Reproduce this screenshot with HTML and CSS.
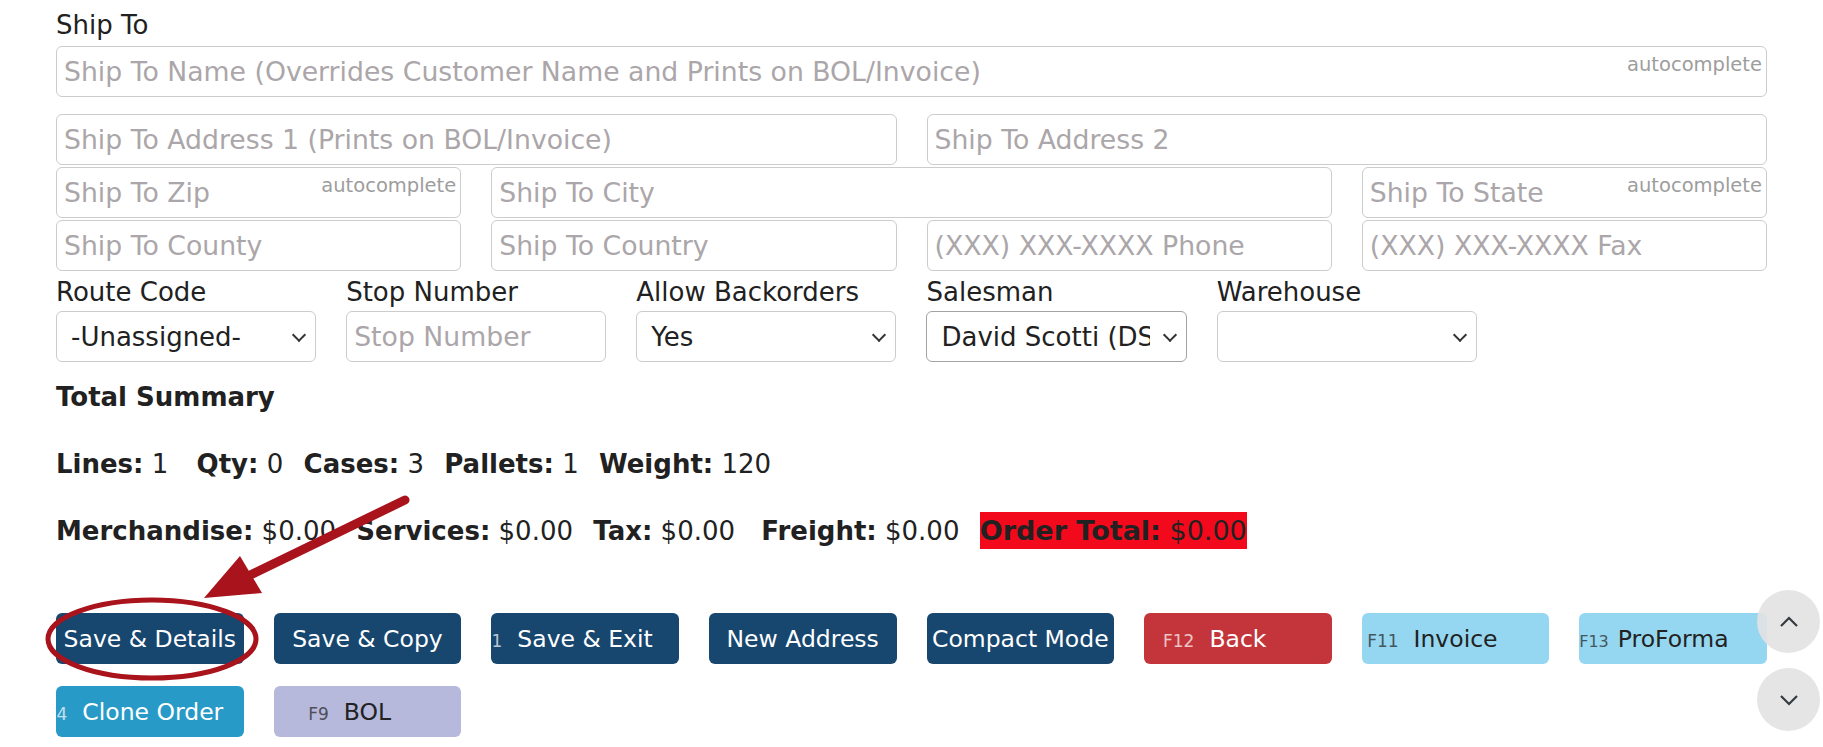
FILE: index.html
```html
<!DOCTYPE html>
<html>
<head>
<meta charset="utf-8">
<link rel="stylesheet" href="styles.css">
</head>
<body>
<div class="page">
  <div class="section-label">Ship To</div>
  <div class="field">
    <input class="ctl" placeholder="Ship To Name (Overrides Customer Name and Prints on BOL/Invoice)">
    <span class="hint">autocomplete</span>
  </div>

  <div class="grid4 addr">
    <input class="ctl span2" placeholder="Ship To Address 1 (Prints on BOL/Invoice)">
    <input class="ctl span2" placeholder="Ship To Address 2">
  </div>
  <div class="grid4 tight">
    <div class="field"><input class="ctl" placeholder="Ship To Zip"><span class="hint">autocomplete</span></div>
    <input class="ctl span2" placeholder="Ship To City">
    <div class="field"><input class="ctl" placeholder="Ship To State"><span class="hint">autocomplete</span></div>
  </div>
  <div class="grid4 tight">
    <input class="ctl" placeholder="Ship To County">
    <input class="ctl" placeholder="Ship To Country">
    <input class="ctl" placeholder="(XXX) XXX-XXXX Phone">
    <input class="ctl" placeholder="(XXX) XXX-XXXX Fax">
  </div>

  <div class="grid6">
    <div class="opt"><label class="opt-label">Route Code</label>
      <div class="selwrap"><select class="ctl sel"><option>-Unassigned-</option></select></div></div>
    <div class="opt"><label class="opt-label">Stop Number</label>
      <input class="ctl" placeholder="Stop Number"></div>
    <div class="opt"><label class="opt-label">Allow Backorders</label>
      <div class="selwrap"><select class="ctl sel"><option>Yes</option></select></div></div>
    <div class="opt"><label class="opt-label">Salesman</label>
      <div class="selwrap"><select class="ctl sel dark"><option>David Scotti (DS)</option></select></div></div>
    <div class="opt"><label class="opt-label">Warehouse</label>
      <div class="selwrap"><select class="ctl sel"><option></option></select></div></div>
  </div>

  <div class="summary">
    <p class="sum-title">Total Summary</p>
    <p class="sum-line">
      <span class="item wide"><b>Lines:</b> 1</span>
      <span class="item"><b>Qty:</b> 0</span>
      <span class="item"><b>Cases:</b> 3</span>
      <span class="item"><b>Pallets:</b> 1</span>
      <span class="item"><b>Weight:</b> 120</span>
    </p>
    <p class="sum-line">
      <span class="item"><b>Merchandise:</b> $0.00</span>
      <span class="item"><b>Services:</b> $0.00</span>
      <span class="item tax"><b>Tax:</b> $0.00</span>
      <span class="item"><b>Freight:</b> $0.00</span>
      <span class="item total"><b>Order Total:</b> $0.00</span>
    </p>
  </div>

  <div class="btns">
    <button class="btn navy"><span class="txt">Save &amp; Details</span></button>
    <button class="btn navy"><span class="txt">Save &amp; Copy</span></button>
    <button class="btn navy"><span class="txt"><span class="key">1</span>Save &amp; Exit</span></button>
    <button class="btn navy"><span class="txt">New Address</span></button>
    <button class="btn navy"><span class="txt">Compact Mode</span></button>
    <button class="btn red"><span class="txt"><span class="key">F12</span>Back</span></button>
    <button class="btn sky"><span class="txt"><span class="key">F11</span>Invoice</span></button>
    <button class="btn sky"><span class="txt"><span class="key near">F13</span>ProForma</span></button>
    <button class="btn teal"><span class="txt shift"><span class="key">4</span>Clone Order</span></button>
    <button class="btn lav"><span class="txt"><span class="key">F9</span>BOL</span></button>
  </div>
</div>

<svg class="annot" width="1823" height="747" viewBox="0 0 1823 747">
  <line x1="405" y1="500" x2="244" y2="578" stroke="#a8131c" stroke-width="9" stroke-linecap="round"/>
  <polygon points="204,598 240,556 262,593" fill="#a8131c"/>
  <ellipse cx="152" cy="639" rx="104" ry="39" fill="none" stroke="#a8131c" stroke-width="5"/>
</svg>

<div class="scroller">
  <button class="circ"><svg width="20" height="12" viewBox="0 0 20 12"><polyline points="2,10 10,2 18,10" fill="none" stroke="#343a40" stroke-width="2.2"/></svg></button>
  <button class="circ"><svg width="20" height="12" viewBox="0 0 20 12"><polyline points="2,2 10,10 18,2" fill="none" stroke="#343a40" stroke-width="2.2"/></svg></button>
</div>
</body>
</html>
```

FILE: styles.css
```css
* { box-sizing: border-box; }
html, body { margin: 0; padding: 0; background: #fff; }
body {
  font-family: "DejaVu Sans", "Liberation Sans", sans-serif;
  font-size: 26px;
  color: #212121;
  width: 1823px;
  height: 747px;
  overflow: hidden;
  position: relative;
}
.page { padding: 8px 56px 0 56px; }

.section-label { height: 38px; line-height: 34px; }

.field { position: relative; }
.ctl {
  display: block;
  width: 100%;
  height: 51px;
  border: 1px solid #cccccc;
  border-radius: 6px;
  padding: 0 7px;
  font-family: inherit;
  font-size: 26.7px;
  color: #212121;
  background: #fff;
  outline: none;
}
.ctl::placeholder { color: #aba6a9; opacity: 1; }
.hint {
  position: absolute;
  right: 5px;
  top: 8px;
  font-size: 19.5px;
  color: #9d9d9d;
  line-height: 22px;
}

.grid4 {
  display: grid;
  grid-template-columns: repeat(4, 1fr);
  column-gap: 30px;
}
.span2 { grid-column: span 2; }
.addr { margin-top: 17px; }
.tight { margin-top: 2px; }

.grid6 {
  display: grid;
  grid-template-columns: repeat(6, 1fr);
  column-gap: 30px;
}
.opt-label { display: block; height: 40px; line-height: 42px; font-size: 26px; }
.selwrap { position: relative; }
.selwrap::after {
  content: "";
  position: absolute;
  right: 12px;
  top: 50%;
  width: 8px;
  height: 8px;
  border-right: 2px solid #333;
  border-bottom: 2px solid #333;
  transform: translateY(-70%) rotate(45deg);
  pointer-events: none;
}
.sel {
  -webkit-appearance: none;
  appearance: none;
  padding: 0 36px 0 14px;
  font-size: 26px;
}
.sel.dark { border-color: #a3a3a3; }

.summary { padding-top: 17px; }
.sum-title { margin: 0; font-weight: bold; line-height: 36px; }
.sum-line { margin: 31px 0 0 0; line-height: 36px; white-space: nowrap; }
.item { margin-right: 12px; }
.item.wide { margin-right: 20px; }
.item.tax { margin-right: 18px; }
.total { background: #f20a1c; padding: 3px 0; font-size: 27px; }

.btns {
  margin-top: 64px;
  display: grid;
  grid-template-columns: repeat(8, 1fr);
  column-gap: 30px;
  row-gap: 22px;
}
.btn {
  height: 51px;
  border: none;
  border-radius: 6px;
  font-family: inherit;
  font-size: 23.5px;
  display: flex;
  align-items: center;
  justify-content: center;
  padding: 0;
}
.txt { position: relative; white-space: nowrap; }
.txt.shift { left: 3px; }
.key {
  position: absolute;
  right: calc(100% + 15px);
  top: 50%;
  transform: translateY(-38%);
  font-size: 17px;
  opacity: 0.7;
  white-space: nowrap;
}
.key.near { right: calc(100% + 9px); font-size: 16px; }
.navy { background: #17466f; color: #fff; }
.red { background: #c4353b; color: #fff; }
.sky { background: #95d7f0; color: #222; }
.teal { background: #289ac7; color: #fff; }
.lav { background: #b6b9dc; color: #222; }

.annot { position: absolute; left: 0; top: 0; pointer-events: none; }

.scroller {
  position: absolute;
  right: 3px;
  bottom: 16px;
  display: flex;
  flex-direction: column;
  gap: 15px;
}
.circ {
  width: 63px;
  height: 63px;
  border-radius: 50%;
  border: none;
  background: rgba(226, 226, 226, 0.9);
  display: flex;
  align-items: center;
  justify-content: center;
  padding: 0;
}
```
